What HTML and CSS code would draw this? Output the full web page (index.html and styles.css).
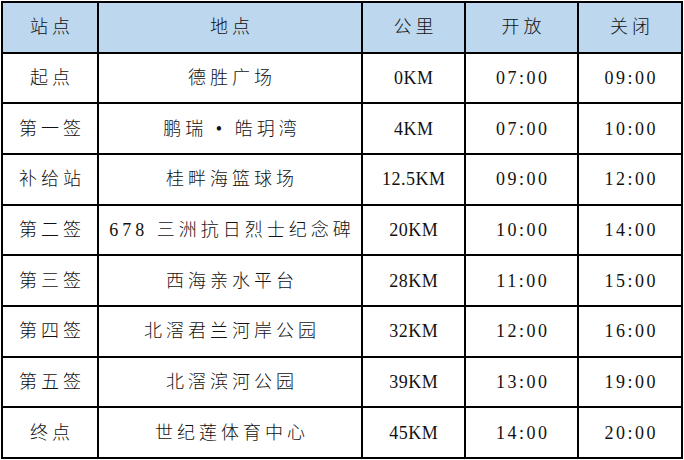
FILE: index.html
```html
<!DOCTYPE html>
<html lang="zh-CN">
<head>
<meta charset="utf-8">
<title>站点表</title>
<link rel="stylesheet" href="styles.css">
</head>
<body>
<table class="sched">
  <colgroup>
    <col class="c1"><col class="c2"><col class="c3"><col class="c4"><col class="c5">
  </colgroup>
  <thead>
    <tr><th>站点</th><th>地点</th><th>公里</th><th>开放</th><th>关闭</th></tr>
  </thead>
  <tbody>
    <tr><td>起点</td><td>德胜广场</td><td class="km">0KM</td><td class="num">07:00</td><td class="num">09:00</td></tr>
    <tr><td>第一签</td><td>鹏瑞 • 皓玥湾</td><td class="km">4KM</td><td class="num">07:00</td><td class="num">10:00</td></tr>
    <tr><td>补给站</td><td>桂畔海篮球场</td><td class="km">12.5KM</td><td class="num">09:00</td><td class="num">12:00</td></tr>
    <tr><td>第二签</td><td>678 三洲抗日烈士纪念碑</td><td class="km">20KM</td><td class="num">10:00</td><td class="num">14:00</td></tr>
    <tr><td>第三签</td><td>西海亲水平台</td><td class="km">28KM</td><td class="num">11:00</td><td class="num">15:00</td></tr>
    <tr><td>第四签</td><td>北滘君兰河岸公园</td><td class="km">32KM</td><td class="num">12:00</td><td class="num">16:00</td></tr>
    <tr><td>第五签</td><td>北滘滨河公园</td><td class="km">39KM</td><td class="num">13:00</td><td class="num">19:00</td></tr>
    <tr><td>终点</td><td>世纪莲体育中心</td><td class="km">45KM</td><td class="num">14:00</td><td class="num">20:00</td></tr>
  </tbody>
</table>
</body>
</html>
```

FILE: styles.css
```css
html, body {
  margin: 0;
  padding: 0;
  background: #fff;
}

.sched {
  margin: 1px 0 0 1px;
  width: 682px;
  table-layout: fixed;
  border-collapse: separate;
  border-spacing: 2px;
  background: #000;
  font-family: "Liberation Serif", "Noto Sans CJK SC", serif;
  font-size: 18px;
  font-weight: 300;
  color: #111;
}

.c1 { width: 94px; }
.c2 { width: 262px; }
.c3 { width: 101px; }
.c4 { width: 111px; }
.c5 { width: 102px; }

.sched tr {
  height: 48.67px;
}

.sched th,
.sched td {
  background: #fff;
  padding: 0 0 0 4px;
  text-align: center;
  vertical-align: middle;
  letter-spacing: 4px;
  white-space: nowrap;
  font-weight: 300;
  line-height: 1;
}

.sched th {
  background: #bdd7ee;
}

.sched td.num {
  letter-spacing: 2.5px;
  padding-left: 2.5px;
  font-weight: 400;
}

.sched td.km {
  letter-spacing: 0.5px;
  padding-left: 0.5px;
  font-weight: 400;
}
```
